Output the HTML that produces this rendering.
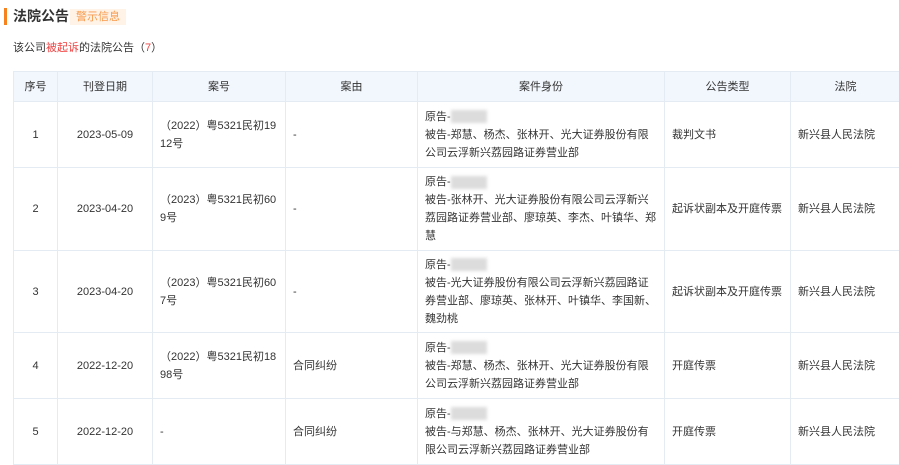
<!DOCTYPE html><html><head><meta charset="utf-8"><style>
body{margin:0;background:#fff;font-family:"Liberation Sans","Noto Sans CJK SC",sans-serif;color:#333;font-size:11px;width:899px;height:463px;overflow:hidden;position:relative}
.t{position:absolute;left:4px;top:8px;height:17px;border-left:3px solid #f5821f;padding-left:6px;font-size:14px;font-weight:bold;line-height:17px;color:#333}
.tag{position:absolute;left:70px;top:9px;background:#fff2e6;color:#f79a4c;font-size:11px;padding:0 6px;line-height:16px;font-weight:normal}
.sub{position:absolute;left:13px;top:40px;font-size:11px;line-height:16px}
.sub span{color:#f04040}
table{position:absolute;left:13px;top:71px;border-collapse:collapse;table-layout:fixed;width:887px}
td,th{border:1px solid #e5ebf3;padding:0 7px;line-height:18px;vertical-align:middle;font-weight:normal}
th{background:#f2f7fd;height:29px;text-align:center;color:#333}
td.c{text-align:center}
td.n{word-break:break-all}
.b{display:inline-block;width:36px;height:13px;background:#dcdcdc;vertical-align:middle;filter:blur(1.5px)}
</style></head><body>
<div class="t">法院公告</div><div class="tag">警示信息</div>
<div class="sub">该公司<span>被起诉</span>的法院公告（<span>7</span>）</div>
<table>
<colgroup><col style="width:44px"><col style="width:95px"><col style="width:133px"><col style="width:132px"><col style="width:247px"><col style="width:126px"><col style="width:110px"></colgroup>
<tr><th>序号</th><th>刊登日期</th><th>案号</th><th>案由</th><th>案件身份</th><th>公告类型</th><th>法院</th></tr>
<tr style="height:66px"><td class="c">1</td><td class="c">2023-05-09</td><td class="n">（2022）粤5321民初1912号</td><td>-</td><td>原告-<span class="b"></span><br>被告-郑慧、杨杰、张林开、光大证券股份有限公司云浮新兴荔园路证券营业部</td><td>裁判文书</td><td>新兴县人民法院</td></tr>
<tr style="height:83px"><td class="c">2</td><td class="c">2023-04-20</td><td class="n">（2023）粤5321民初609号</td><td>-</td><td>原告-<span class="b"></span><br>被告-张林开、光大证券股份有限公司云浮新兴荔园路证券营业部、廖琼英、李杰、叶镇华、郑慧</td><td>起诉状副本及开庭传票</td><td>新兴县人民法院</td></tr>
<tr style="height:82px"><td class="c">3</td><td class="c">2023-04-20</td><td class="n">（2023）粤5321民初607号</td><td>-</td><td>原告-<span class="b"></span><br>被告-光大证券股份有限公司云浮新兴荔园路证券营业部、廖琼英、张林开、叶镇华、李国新、魏劲桃</td><td>起诉状副本及开庭传票</td><td>新兴县人民法院</td></tr>
<tr style="height:66px"><td class="c">4</td><td class="c">2022-12-20</td><td class="n">（2022）粤5321民初1898号</td><td>合同纠纷</td><td>原告-<span class="b"></span><br>被告-郑慧、杨杰、张林开、光大证券股份有限公司云浮新兴荔园路证券营业部</td><td>开庭传票</td><td>新兴县人民法院</td></tr>
<tr style="height:66px"><td class="c">5</td><td class="c">2022-12-20</td><td>-</td><td>合同纠纷</td><td>原告-<span class="b"></span><br>被告-与郑慧、杨杰、张林开、光大证券股份有限公司云浮新兴荔园路证券营业部</td><td>开庭传票</td><td>新兴县人民法院</td></tr>
</table>
</body></html>
